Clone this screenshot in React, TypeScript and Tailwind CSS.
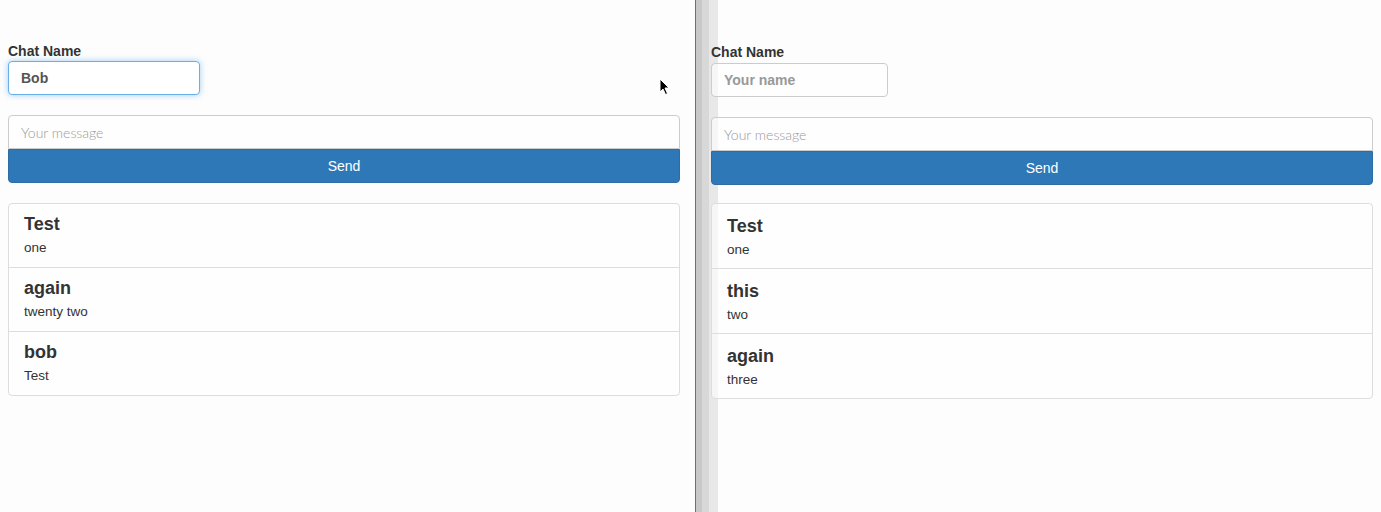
import React from 'react';

type Msg = { name: string; text: string };

const leftMsgs: Msg[] = [
  { name: 'Test', text: 'one' },
  { name: 'again', text: 'twenty two' },
  { name: 'bob', text: 'Test' },
];

const rightMsgs: Msg[] = [
  { name: 'Test', text: 'one' },
  { name: 'this', text: 'two' },
  { name: 'again', text: 'three' },
];

const ChatPane: React.FC<{
  msgs: Msg[];
  name?: string;
  nameWidth: string;
  top: string;
  itemH: string;
  itemPad: string;
  listGap: string;
}> = ({ msgs, name, nameWidth, top, itemH, itemPad, listGap }) => {
  return (
    <div className={`flex flex-col ${top}`}>
      <label className="block text-[14px] leading-[20px] font-bold text-[#333]">Chat Name</label>
      {name ? (
        <div
          className={`${nameWidth} h-[34px] flex items-center px-[12px] rounded-[4px] border border-[#66afe9] bg-white shadow-[0_0_6px_rgba(102,175,233,0.6)] text-[14px] font-bold text-[#555]`}
        >
          {name}
        </div>
      ) : (
        <div
          className={`${nameWidth} mt-[1px] h-[34px] flex items-center px-[12px] rounded-[4px] border border-[#ccc] bg-white/60 text-[14px] font-bold text-[#999]`}
        >
          Your name
        </div>
      )}
      <div className="mt-[20px] h-[34px] flex items-center px-[12px] rounded-t-[4px] border border-[#ccc] bg-white/60 text-[14px] font-light text-[#999] [font-family:Lato,'Liberation_Sans',sans-serif]">
        Your message
      </div>
      <div className="h-[34px] flex items-center justify-center rounded-b-[4px] bg-[#2e78b7] border border-[#2e6da4] text-white text-[14px]">
        Send
      </div>
      <div className={`${listGap} flex flex-col`}>
        {msgs.map((m, i) => (
          <div
            key={i}
            className={`${itemH} ${itemPad} ${i > 0 ? '-mt-px' : ''} ${i === 0 ? 'rounded-t-[4px]' : ''} ${
              i === msgs.length - 1 ? 'rounded-b-[4px]' : ''
            } border border-[#ddd] bg-white/60 px-[15px]`}
          >
            <div className="text-[18px] leading-[22px] font-semibold text-[#333]">{m.name}</div>
            <div className="mt-[3px] text-[13.5px] leading-[20px] text-[#333]">{m.text}</div>
          </div>
        ))}
      </div>
    </div>
  );
};

const Cursor: React.FC = () => (
  <svg className="absolute left-[659px] top-[78px]" width="12" height="18" viewBox="0 0 12 18">
    <path d="M1 1 L1 14 L4 11 L6.5 16.5 L8.5 15.5 L6 10 L10 10 Z" fill="#000" stroke="#fff" strokeWidth="1" />
  </svg>
);

const App: React.FC = () => {
  return (
    <div className="relative flex h-[512px] w-[1381px] overflow-hidden bg-[#fdfdfd] [font-family:'Liberation_Sans',Arial,sans-serif]">
      <div className="w-[695px] shrink-0 pl-[8px] pr-[15px]">
        <ChatPane
          msgs={leftMsgs}
          name="Bob"
          nameWidth="w-[192px]"
          top="pt-[41px]"
          itemH="h-[65px]"
          itemPad="pt-[9px]"
          listGap="mt-[20px]"
        />
      </div>
      <div className="w-px shrink-0 bg-[#6f6f6f]" />
      <div className="relative flex-1">
        <div className="absolute inset-y-0 left-0 flex">
          <div className="w-[6px] bg-[#c8c8c8]" />
          <div className="w-[7px] bg-[#d8d8d8]" />
          <div className="w-[9px] bg-[#e8e8e8]" />
        </div>
        <div className="relative pl-[15px] pr-[8px]">
          <ChatPane
            msgs={rightMsgs}
            nameWidth="w-[177px]"
            top="pt-[42px]"
            itemH="h-[66px]"
            itemPad="pt-[11px]"
            listGap="mt-[18px]"
          />
        </div>
      </div>
      <Cursor />
    </div>
  );
};

export default App;
